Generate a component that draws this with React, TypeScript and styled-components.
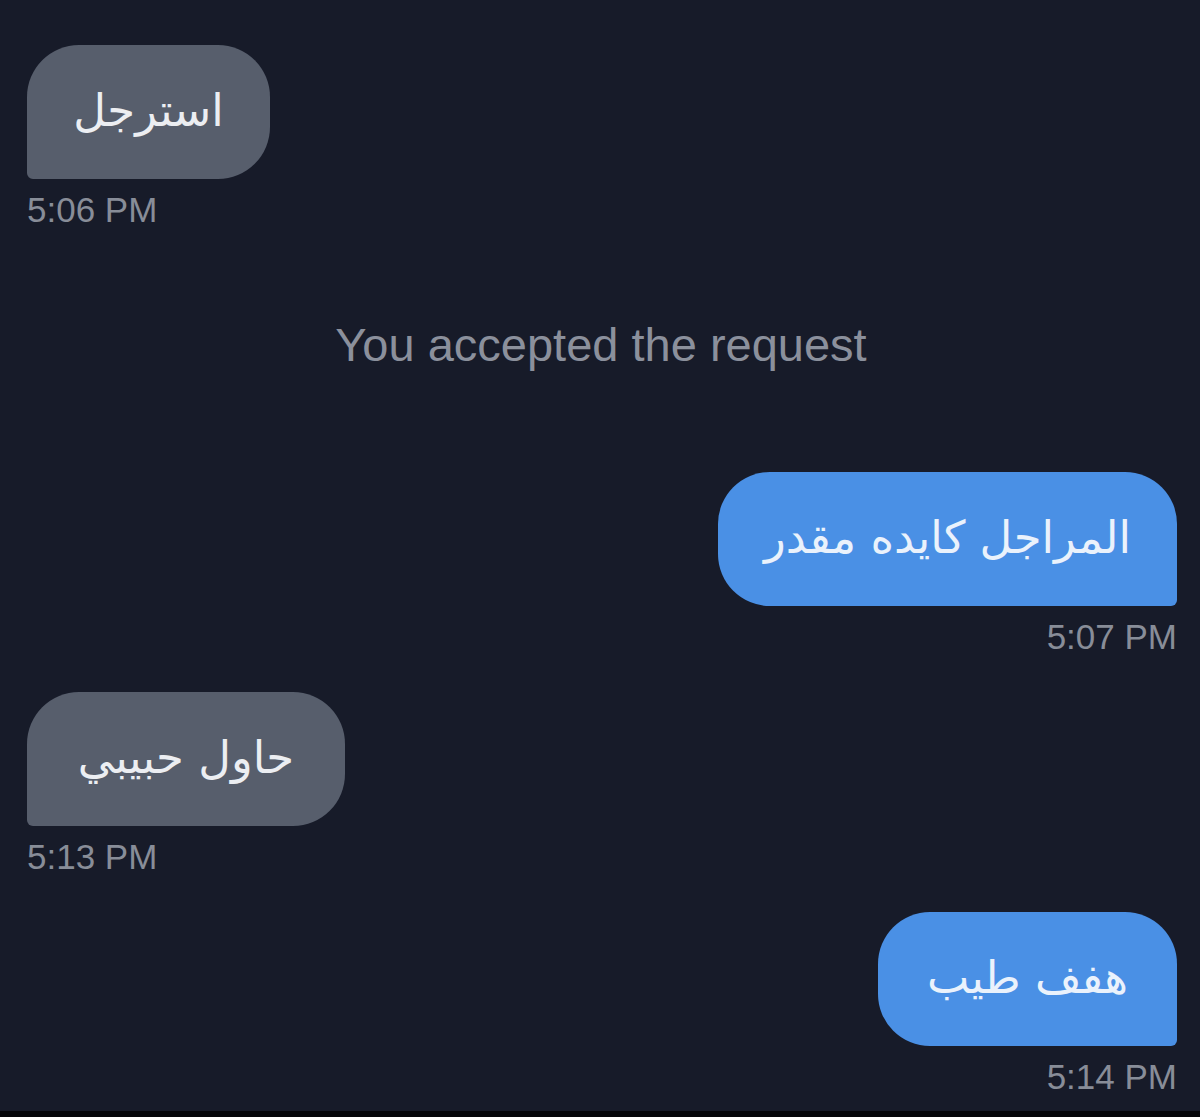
import React from "react";
import styled, { createGlobalStyle } from "styled-components";

const GlobalStyle = createGlobalStyle`
  html, body {
    margin: 0;
    padding: 0;
    background: #05060a;
  }
  #root {
    min-height: 1117px;
  }
`;

const Screen = styled.main`
  box-sizing: border-box;
  width: 1200px;
  height: 1111px;
  background: #171b29;
  padding: 45px 23px 0 27px;
  display: flex;
  flex-direction: column;
  font-family: "Liberation Sans", Arial, sans-serif;
`;

const Strip = styled.div`
  width: 1200px;
  height: 6px;
  background: #05060a;
`;

type Side = "in" | "out";

const Row = styled.div<{ $side: Side; $gap: number }>`
  display: flex;
  flex-direction: column;
  align-items: ${(p) => (p.$side === "out" ? "flex-end" : "flex-start")};
  margin-top: ${(p) => p.$gap}px;
`;

const Bubble = styled.div<{ $side: Side }>`
  box-sizing: border-box;
  height: 134px;
  display: flex;
  align-items: center;
  justify-content: center;
  padding: 0 0 4px 0;
  border-radius: ${(p) =>
    p.$side === "out" ? "52px 52px 6px 52px" : "52px 52px 52px 6px"};
  background: ${(p) => (p.$side === "out" ? "#4a90e5" : "#575e6c")};
  color: ${(p) => (p.$side === "out" ? "#eaf2fc" : "#eceef2")};
  font-family: "DejaVu Sans", sans-serif;
  font-size: 45px;
  line-height: 1;
  direction: rtl;
`;

const Time = styled.div`
  margin-top: 13px;
  font-size: 35px;
  line-height: 1;
  color: #888d98;
`;

const Notice = styled.div`
  margin-top: 94px;
  text-align: center;
  font-size: 47px;
  line-height: 1;
  color: #8b909c;
  padding-right: 2px;
`;

type Msg = { side: Side; text: string; time: string; gap: number; width: number };

const before: Msg[] = [
  { side: "in", text: "استرجل", time: "5:06 PM", gap: 0, width: 243 },
];

const after: Msg[] = [
  { side: "out", text: "المراجل كايده مقدر", time: "5:07 PM", gap: 104, width: 459 },
  { side: "in", text: "حاول حبيبي", time: "5:13 PM", gap: 38, width: 318 },
  { side: "out", text: "هفف طيب", time: "5:14 PM", gap: 38, width: 299 },
];

function Message({ m }: { m: Msg }) {
  return (
    <Row $side={m.side} $gap={m.gap}>
      <Bubble $side={m.side} style={{ width: m.width }}>
        {m.text}
      </Bubble>
      <Time>{m.time}</Time>
    </Row>
  );
}

export default function App() {
  return (
    <>
      <GlobalStyle />
      <Screen>
        {before.map((m) => (
          <Message key={m.time} m={m} />
        ))}
        <Notice>You accepted the request</Notice>
        {after.map((m) => (
          <Message key={m.time} m={m} />
        ))}
      </Screen>
      <Strip />
    </>
  );
}
